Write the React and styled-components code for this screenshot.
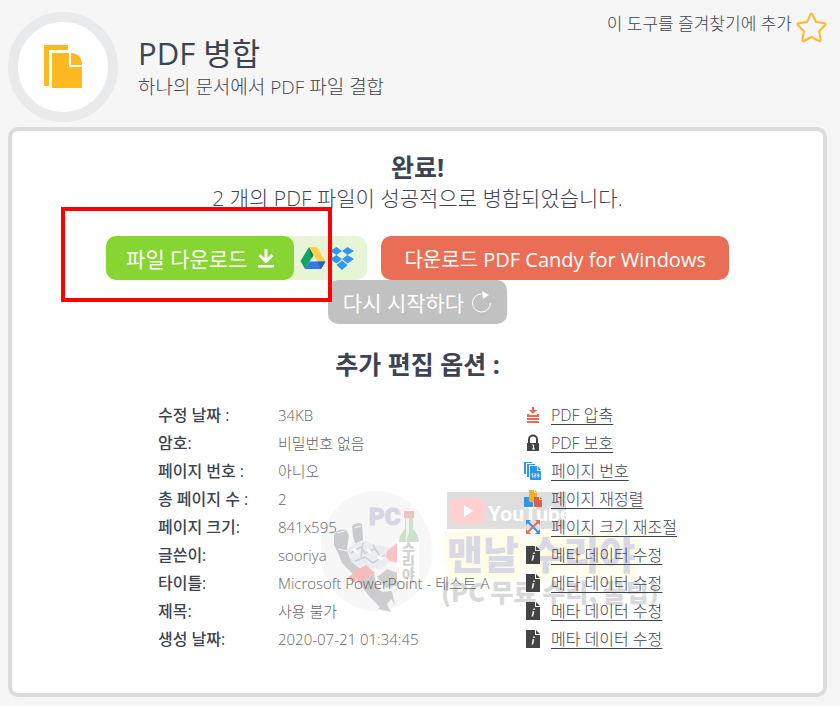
import React from 'react';
import styled, { createGlobalStyle } from 'styled-components';

const GlobalStyle = createGlobalStyle`
  * {
    box-sizing: border-box;
  }
  body {
    margin: 0;
    background: #f6f6f6;
    color: #3d4451;
    font-family: "Open Sans", "Noto Sans CJK KR", sans-serif;
    font-weight: 300;
  }
  h1, h2, p {
    margin: 0;
  }
  svg {
    display: block;
    flex: none;
  }
`

const Page = styled.div`
  padding: 12px 13px 8px 8px;
`

const Header = styled.header`
  display: flex;
  align-items: flex-start;
  margin-bottom: 5px;
`

const ToolIcon = styled.div`
  display: flex;
  align-items: center;
  justify-content: center;
  width: 110px;
  height: 110px;
  border: 10px solid #e9eaec;
  border-radius: 50%;
  background: #fff;
`

const ToolName = styled.div`
  flex: 1;
  padding: 20px 0 0 20px;
`

const Title = styled.h1`
  font-size: 31px;
  font-weight: 400;
  line-height: 42px;
`

const Description = styled.p`
  font-size: 19px;
  line-height: 26px;
`

const BookmarkButton = styled.button`
  display: flex;
  align-items: flex-start;
  gap: 4px;
  padding: 0;
  border: 0;
  background: none;
  color: inherit;
  font: inherit;
  font-size: 17px;
  line-height: 24px;
  cursor: pointer;
`

const Panel = styled.main`
  position: relative;
  padding: 20px 20px 40px;
  border: 4px solid #dcdcdc;
  border-radius: 10px;
  background: #fff;
`

const Heading = styled.h2`
  font-size: 25px;
  font-weight: 700;
  line-height: 32px;
  text-align: center;
`

const Message = styled.p`
  font-size: 21px;
  line-height: 30px;
  text-align: center;
`

const Actions = styled.div`
  display: flex;
  flex-wrap: wrap;
  justify-content: center;
  column-gap: 14px;
  margin: 23px 0 24px;
`

const DownloadGroup = styled.div`
  position: relative;
  display: flex;
  border-radius: 10px;
  background: #e6f5d6;
`

const ActionButton = styled.button`
  display: flex;
  align-items: center;
  gap: ${props => props.$gap || '8px'};
  height: 44px;
  padding: 0 ${props => props.$pad || '20px'};
  border: 0;
  border-radius: 10px;
  background: ${props => props.$color};
  color: #fff;
  font: inherit;
  font-size: ${props => props.$size || '21px'};
  font-weight: 400;
  cursor: pointer;
`

const CloudLinks = styled.div`
  display: flex;
  align-items: center;
  gap: 4px;
  padding: 0 13px 0 6px;
`

const Highlight = styled.div`
  position: absolute;
  z-index: 2;
  top: -29px;
  left: -45px;
  right: 35px;
  bottom: -22px;
  border: 4px solid #fe0000;
  pointer-events: none;
`

const Details = styled.div`
  position: relative;
  width: fit-content;
  margin: 21px auto 0;
`

const DetailsTable = styled.table`
  position: relative;
  z-index: 1;
  border-collapse: collapse;
  font-size: 15px;
  line-height: 28px;
  th, td {
    height: 28px;
    padding: 0;
    text-align: left;
    white-space: nowrap;
  }
`

const Label = styled.th`
  width: 120px;
  font-size: 16px;
  font-weight: 500;
`

const Value = styled.td`
  width: 246px;
  color: #666;
`

const OptionLink = styled.a`
  display: flex;
  align-items: center;
  gap: 9px;
  color: #3d4451;
  font-size: 16px;
  text-decoration: none;
  span {
    text-decoration: underline;
    text-underline-offset: 3px;
  }
`

const Watermark = styled.svg`
  position: absolute;
  top: 86px;
  left: 163px;
  pointer-events: none;
`

const MergeIcon = () => (
  <svg width="38" height="44" viewBox="1 0 38 44" fill="#ffb822">
    <path d="M1 0h24v5H6v36H1z" />
    <path d="M9 8h17v14h13v21H9z" />
    <path d="M28 8a11 11 0 0 1 11 12H28z" />
  </svg>
)

const StarIcon = () => (
  <svg width="31" height="31" viewBox="0 0 31 31" fill="none" stroke="#ffb92e" strokeWidth="2" strokeLinejoin="round">
    <path d="M14.5 2.3Q15.5 .8 16.5 2.3L20 10L28.5 11.3Q30.3 11.8 29 13.3L23.2 19.3L24.6 27.8Q24.6 29.7 23 29L15.5 25L8 29Q6.2 29.7 6.4 27.8L7.8 19.3L2 13.3Q.8 11.8 2.5 11.3L11 10Z" />
  </svg>
)

const DownloadIcon = () => (
  <svg width="16" height="19" viewBox="0 0 16 19">
    <path d="M8 0v11M1.500 6l6.500 6.500L14.500 6" fill="none" stroke="#fff" strokeWidth="3" />
    <path d="M0 16h16v2.500H0z" fill="#fff" />
  </svg>
)

const DriveIcon = () => (
  <svg width="26" height="22" viewBox="0 0 26 22">
    <path d="M9 0l4.500 8L5 22 .5 14z" fill="#11a462" />
    <path d="M9 0l4.500 8-2 3.500z" fill="#0b8047" />
    <path d="M9 0h8l8.500 14.500h-8z" fill="#ffcf48" />
    <path d="M9.500 14.500h16L21 22H5z" fill="#3777e3" />
    <path d="M17.500 14.500h8L21 22z" fill="#2561d4" />
  </svg>
)

const DropboxIcon = () => (
  <svg width="24" height="23" viewBox="0 0 24 23" fill="#2f98ee">
    <path d="M6.500 0L12 4 6.500 8 0 4zM17.500 0L24 4l-6.500 4L12 4zM6.500 8L12 12l-5.500 4.500L0 12zM17.500 8L24 12l-6.500 4.500L12 12zM12 13.500l5.500 4.500L12 23l-5.500-5z" />
  </svg>
)

const RestartIcon = () => (
  <svg width="20" height="22" viewBox="0 0 20 22">
    <path d="M9.500 3A9 9 0 1 0 18.500 12" fill="none" stroke="#fff" strokeWidth="1" />
    <path d="M10 0l7 4-6 4z" fill="#fff" />
  </svg>
)

const CompressIcon = () => (
  <svg width="18" height="18" viewBox="0 0 18 18" fill="#e96d56">
    <path d="M8 1h2v3h3L9 8 5 4h3z" />
    <path d="M3 8h2v1h8V8h2v3H3zM3 12h12v2H3zM3 15h12v2H3z" />
  </svg>
)

const LockIcon = () => (
  <svg width="18" height="18" viewBox="0 0 18 18">
    <path d="M5 10V5.500a4 4 0 0 1 8 0V10" fill="none" stroke="#444" strokeWidth="2" />
    <path d="M3 9h12v8H3z" fill="#444" />
    <path d="M8 11h1.500v4M8 15h3" fill="none" stroke="#fff" strokeWidth="1" />
  </svg>
)

const NumbersIcon = () => (
  <svg width="18" height="18" viewBox="0 0 18 18" fill="#3196ea">
    <path d="M0 0h8v1H2v11H0zM3 2h8v1H5v12H3z" />
    <path d="M6 4h7v5h4v9H6zM14 4l3 4h-3z" />
    <path d="M7.500 12.500l1-1v4M10 12h2v1.500h-2V15h2M13 12h2v3h-2M13 13.500h2" stroke="#fff" strokeWidth=".7" fill="none" />
  </svg>
)

const ReorderIcon = () => (
  <svg width="18" height="18" viewBox="0 0 18 18">
    <path d="M0 7h5v3h4v7H0zM6 6l3 3H6z" fill="#3196ea" />
    <path d="M5 0h5v3h3v9H5zM11 0l2 2h-2z" fill="#f5ad27" />
    <path d="M10 7h5v3h3v7h-8zM16 7l2 2h-2z" fill="#d9604b" />
  </svg>
)

const ResizeIcon = () => (
  <svg width="18" height="18" viewBox="0 0 18 18">
    <path d="M4 4l10 10" stroke="#2999f0" strokeWidth="2" />
    <path d="M2 2h5L2 7zM16 16h-5l5-5z" fill="#2999f0" />
    <path d="M14 4L4 14" stroke="#e96d56" strokeWidth="2" />
    <path d="M16 2v5l-5-5zM2 16v-5l5 5z" fill="#e96d56" />
  </svg>
)

const MetadataIcon = () => (
  <svg width="18" height="18" viewBox="0 0 18 18">
    <path d="M2 0h9v5h5v13H2zM12 0l4 4h-4z" fill="#444" />
    <path d="M9.500 6.500h1.500l-.4 1.400H9.100zM8.500 9.200h1.900l-1.400 5.400H7.500l1-4.200z" fill="#fff" />
  </svg>
)

const rows = [
  { label: '수정 날짜 :', value: '34KB', option: 'PDF 압축', Icon: CompressIcon },
  { label: '암호:', value: '비밀번호 없음', option: 'PDF 보호', Icon: LockIcon },
  { label: '페이지 번호 :', value: '아니오', option: '페이지 번호', Icon: NumbersIcon },
  { label: '총 페이지 수 :', value: '2', option: '페이지 재정렬', Icon: ReorderIcon },
  { label: '페이지 크기:', value: '841x595', option: '페이지 크기 재조절', Icon: ResizeIcon },
  { label: '글쓴이:', value: 'sooriya', option: '메타 데이터 수정', Icon: MetadataIcon },
  { label: '타이틀:', value: 'Microsoft PowerPoint - 테스트 A', option: '메타 데이터 수정', Icon: MetadataIcon },
  { label: '제목:', value: '사용 불가', option: '메타 데이터 수정', Icon: MetadataIcon },
  { label: '생성 날짜:', value: '2020-07-21 01:34:45', option: '메타 데이터 수정', Icon: MetadataIcon },
];

// Channel logo, drawn faintly behind the details table
const ChannelMark = () => (
  <Watermark width="350" height="128" viewBox="0 0 350 128" fontFamily='"Noto Sans CJK KR", sans-serif' fontWeight="900">
    <defs>
      <filter id="glow" x="-10%" y="-30%" width="120%" height="160%">
        <feGaussianBlur stdDeviation="3" />
      </filter>
    </defs>
    <ellipse cx="55" cy="64" rx="56" ry="60" fill="#000" opacity=".03" />
    <g opacity=".24">
      <path d="M13 48q4-7 12-5l3 5-2 14 2 8-10-2-5-10z" fill="#3c3f50" />
      <path d="M31 39q5-5 10-2l1 16-8 4-2-8z" fill="#3c3f50" />
      <path d="M16 46l8-2M33 41l7-2M17 62l9 2" stroke="#fff" strokeWidth="1" />
      <path d="M17 66l10 2 5 8 8 6-7 6-12-12z" fill="#4a4d58" />
      <path d="M26 62l8-6 10-2 10 4 14 2 2 14-10 8-20-2-10-6z" fill="#c6cadb" />
      <path d="M30 66l10-6 4 6 10-4M34 74l10-4 8 6 12-8M52 58l6 10M42 56l-2 14" fill="none" stroke="#4c5272" strokeWidth="1.500" />
      <path d="M32 62l6 4M46 62l4 4M56 70l6 2" stroke="#fff" strokeWidth="3" />
      <path d="M66 64l10-8 5 5-3 15-9-2-4-4z" fill="#f22" />
      <path d="M31 86l14-8 9 8-15 10z" fill="#f00" />
      <path d="M27 90l5 6 4-3-4-6z" fill="#f00" />
      <path d="M38 96l15-9 3 13 9 9-6 11-11-11z" fill="#42454e" />
      <path d="M56 90l10-8 11 4v12l-12 3z" fill="#575150" />
      <path d="M52 112l8 6-3 4 13 3-4-8 4-5 4 6-3-14-12 1z" fill="#4a4d55" />
      <path d="M84 30h8v12q6 6 6 14v34H78V56q0-8 6-14z" fill="#4a9a44" />
      <path d="M85 31h3v14l-3 10z" fill="#d8f5d0" />
      <path d="M83 24h10v7H83z" fill="#d22" />
    </g>
    <path d="M76 55h22v39H76z" fill="#fff" />
    <text x="48" y="38" fontSize="24" fontFamily='Roboto, "Liberation Sans", sans-serif' fontWeight="900" fill="#d6d6e4" stroke="#d6d6e4">PC</text>
    <g fontSize="14" fill="#d2d2d2">
      <text x="81" y="67">수</text>
      <text x="81" y="80">리</text>
      <text x="81" y="93">야</text>
    </g>
    <rect x="126" y="5" width="119" height="37" fill="#dedede" />
    <rect x="129" y="11" width="35" height="26" rx="6" fill="#ffd0d0" />
    <path d="M143 18v12l9-6z" fill="#fff" />
    <text x="167" y="34" fontSize="21" fontFamily="Roboto, sans-serif" fontWeight="700" fill="#fff">YouTube</text>
    <g fontSize="39">
      <text x="126" y="82" fill="#fff9c8" stroke="#fff9c8" strokeWidth="12" filter="url(#glow)" opacity=".45">맨날 수리야</text>
      <text x="126" y="82" fill="#d9d9e6">맨날 수리야</text>
    </g>
    <text x="120" y="115" fontSize="25" fill="#d9d9d9">(PC 무료 수리, 꿀팁)</text>
  </Watermark>
)

function App() {
  return (
    <Page>
      <GlobalStyle />
      <Header>
        <ToolIcon><MergeIcon /></ToolIcon>
        <ToolName>
          <Title>PDF 병합</Title>
          <Description>하나의 문서에서 PDF 파일 결합</Description>
        </ToolName>
        <BookmarkButton>이 도구를 즐겨찾기에 추가 <StarIcon /></BookmarkButton>
      </Header>

      <Panel>
        <Heading>완료!</Heading>
        <Message>2 개의 PDF 파일이 성공적으로 병합되었습니다.</Message>

        <Actions>
          <DownloadGroup>
            <ActionButton $color="#86d533" $gap="11px">파일 다운로드 <DownloadIcon /></ActionButton>
            <CloudLinks>
              <a href="#drive" aria-label="Google Drive"><DriveIcon /></a>
              <a href="#dropbox" aria-label="Dropbox"><DropboxIcon /></a>
            </CloudLinks>
            <Highlight />
          </DownloadGroup>
          <ActionButton $color="#ea6e56" $size="20px" $pad="23px">다운로드 PDF Candy for Windows</ActionButton>
          <ActionButton $color="#c1c1c1" $pad="15px">다시 시작하다 <RestartIcon /></ActionButton>
        </Actions>

        <Heading>추가 편집 옵션 :</Heading>

        <Details>
          <ChannelMark />
          <DetailsTable>
            <tbody>
              {rows.map(({ label, value, option, Icon }) => (
                <tr key={label}>
                  <Label scope="row">{label}</Label>
                  <Value>{value}</Value>
                  <td>
                    <OptionLink href="#edit"><Icon /><span>{option}</span></OptionLink>
                  </td>
                </tr>
              ))}
            </tbody>
          </DetailsTable>
        </Details>
      </Panel>
    </Page>
  );
}

export default App;
